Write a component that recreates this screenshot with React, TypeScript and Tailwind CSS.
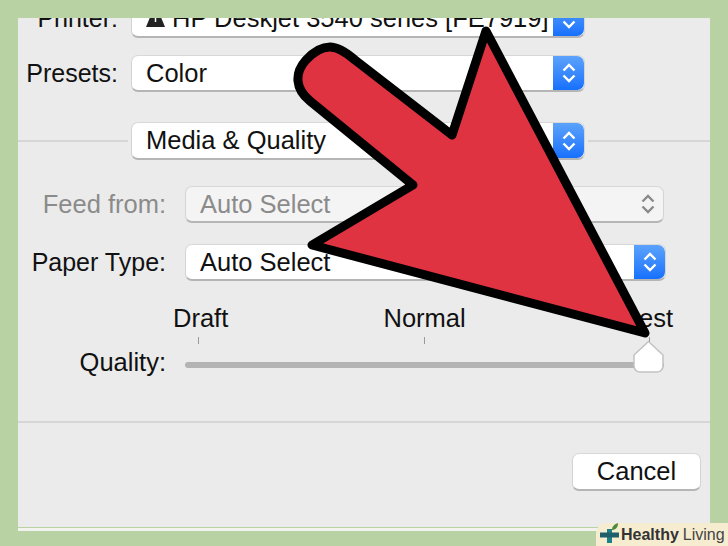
const Stepper = ({ disabled, onlyDown }: { disabled?: boolean; onlyDown?: boolean }) => (
	<span
		className={`flex h-full w-[31px] shrink-0 items-center justify-center rounded-r-[7px] ${
			disabled ? "" : "bg-gradient-to-b from-[#5ba2fb] to-[#1570fd]"
		}`}
	>
		<svg width="16" height="24" viewBox="0 0 16 24" fill="none" stroke={disabled ? "#8a8a8a" : "#ffffff"} strokeWidth="2.4">
			{!onlyDown && <path d="M2.5 9.5 8 4l5.5 5.5" />}
			<path d="M2.5 14.5 8 20l5.5-5.5" />
		</svg>
	</span>
);

const Select = ({
	children,
	disabled,
	onlyDown,
	className,
}: {
	children: React.ReactNode;
	disabled?: boolean;
	onlyDown?: boolean;
	className: string;
}) => (
	<div
		className={`flex items-center rounded-[7px] border-b-2 border-l border-r border-t border-b-[#b5b5b5] border-l-[#d4d4d4] border-r-[#d4d4d4] border-t-[#d8d8d8] ${
			disabled ? "bg-[#f4f4f4] text-[#8b8b8b]" : "bg-white text-[#111]"
		} ${className}`}
	>
		<span className="flex flex-1 items-center gap-[7px] overflow-hidden whitespace-nowrap pl-[14px] pt-[1px]">{children}</span>
		<Stepper disabled={disabled} onlyDown={onlyDown} />
	</div>
);

const Label = ({ children, className }: { children: React.ReactNode; className: string }) => (
	<span className={`shrink-0 whitespace-nowrap text-right ${className}`}>{children}</span>
);

export default function App() {
	return (
		<div className="relative h-[546px] w-[728px] overflow-hidden bg-[#b9d2a3] px-[18px] pt-[18px] font-['Liberation_Sans',sans-serif] text-[25.5px] leading-none text-[#111]">
			<div className="h-[509px] overflow-hidden bg-[#ebebeb]">
				<div className="-mt-[17px] flex h-[37px] items-center">
					<Label className="w-[100px] pb-[2px] text-[25px]">Printer:</Label>
					<Select onlyDown className="ml-[13px] h-full w-[454px]">
						<svg width="19" height="17" viewBox="0 0 19 17" fill="#222" className="mb-[2px] shrink-0">
							<path d="M7 0h5l7 17H0Z" />
							<path d="M9.5 5v7" stroke="#fff" strokeWidth="1.5" />
						</svg>
						<span className="pb-[2px]">HP Deskjet 3540 series [FE7919]</span>
					</Select>
				</div>

				<div className="mt-[17px] flex h-[37px] items-center">
					<Label className="w-[100px] text-[25px]">Presets:</Label>
					<Select className="ml-[13px] h-full w-[454px]">Color</Select>
				</div>

				<div className="mt-[30px] flex h-[38px] items-center">
					<div className="h-[2px] w-[110px] bg-[#d6d6d6]" />
					<Select className="ml-[3px] h-full w-[454px]">Media &amp; Quality</Select>
					<div className="ml-[3px] h-[2px] flex-1 bg-[#d6d6d6]" />
				</div>

				<div className="mt-[26px] flex h-[37px] items-center">
					<Label className="w-[148px] text-[#8b8b8b]">Feed from:</Label>
					<Select disabled className="ml-[19px] h-full w-[479px]">
						Auto Select
					</Select>
				</div>

				<div className="mt-[21px] flex h-[37px] items-center">
					<Label className="w-[148px] text-[25px]">Paper Type:</Label>
					<Select className="ml-[19px] h-full w-[481px]">Auto Select</Select>
				</div>

				<div className="ml-[155px] mt-[25px] flex w-[500px] justify-between">
					<span>Draft</span>
					<span className="-ml-[1px]">Normal</span>
					<span>Best</span>
				</div>

				<div className="mt-[5px] flex h-[38px]">
					<Label className="mt-[13px] w-[148px]">Quality:</Label>
					<div className="ml-[19px] flex-1 pr-[46px]">
						<div className="flex justify-between pl-[13px] pr-[14px]">
							<div className="h-[7px] w-px bg-[#9a9a9a]" />
							<div className="h-[7px] w-px bg-[#9a9a9a]" />
							<div className="h-[7px] w-px bg-[#9a9a9a]" />
						</div>
						<div className="relative mt-[18px] h-[6px] rounded-full bg-[#b3b3b3]">
							<svg className="absolute -top-[22px] right-0" width="31" height="33" viewBox="0 0 31 33">
								<path
									d="M15.5 1.5 30 15v11a6 6 0 0 1-6 6H7a6 6 0 0 1-6-6V15Z"
									fill="#fff"
									stroke="#c2c2c2"
									strokeWidth="1.5"
								/>
							</svg>
						</div>
					</div>
				</div>

				<div className="mt-[46px] h-[2px] bg-[#d6d6d6]" />

				<div className="mr-[9px] mt-[30px] flex justify-end">
					<button className="flex h-[38px] w-[129px] items-center justify-center rounded-[7px] border-b-2 border-l border-r border-t border-b-[#b5b5b5] border-l-[#d4d4d4] border-r-[#d4d4d4] border-t-[#d8d8d8] bg-white pt-[1px]">
						Cancel
					</button>
				</div>
			</div>
			<div className="mt-[1px] h-[3px] bg-[#f2f2ee]" />

			<svg className="absolute left-0 top-0" width="728" height="546" viewBox="0 0 728 546" fill="#e03342" stroke="#000" strokeWidth="9" strokeLinejoin="round">
				<path d="M486 31 452 135 355 60Q340 47 330 47 318 47 306 60 297 70 298 81 299 92 310 101L413 185 312 245 645 333Z" />
			</svg>

			<div className="absolute bottom-0 right-0 flex h-[23px] w-[132px] items-center rounded-tl-[10px] bg-[#f6ecd0] pl-[3px] text-[16px]">
				<svg width="22" height="23" viewBox="0 0 22 23" className="shrink-0">
					<path d="M8 6h5v14H8z" fill="#1f7f86" />
					<path d="M1 9.500h19v5H1z" fill="#1f5f6a" />
					<path d="M13 7c0-4 3-6 6-7 0 4-2 7-6 7Z" fill="#4d8a3a" />
				</svg>
				<span className="font-bold text-[#333]">Healthy</span>
				<span className="ml-[4px] text-[#444]">Living</span>
			</div>
		</div>
	);
}
